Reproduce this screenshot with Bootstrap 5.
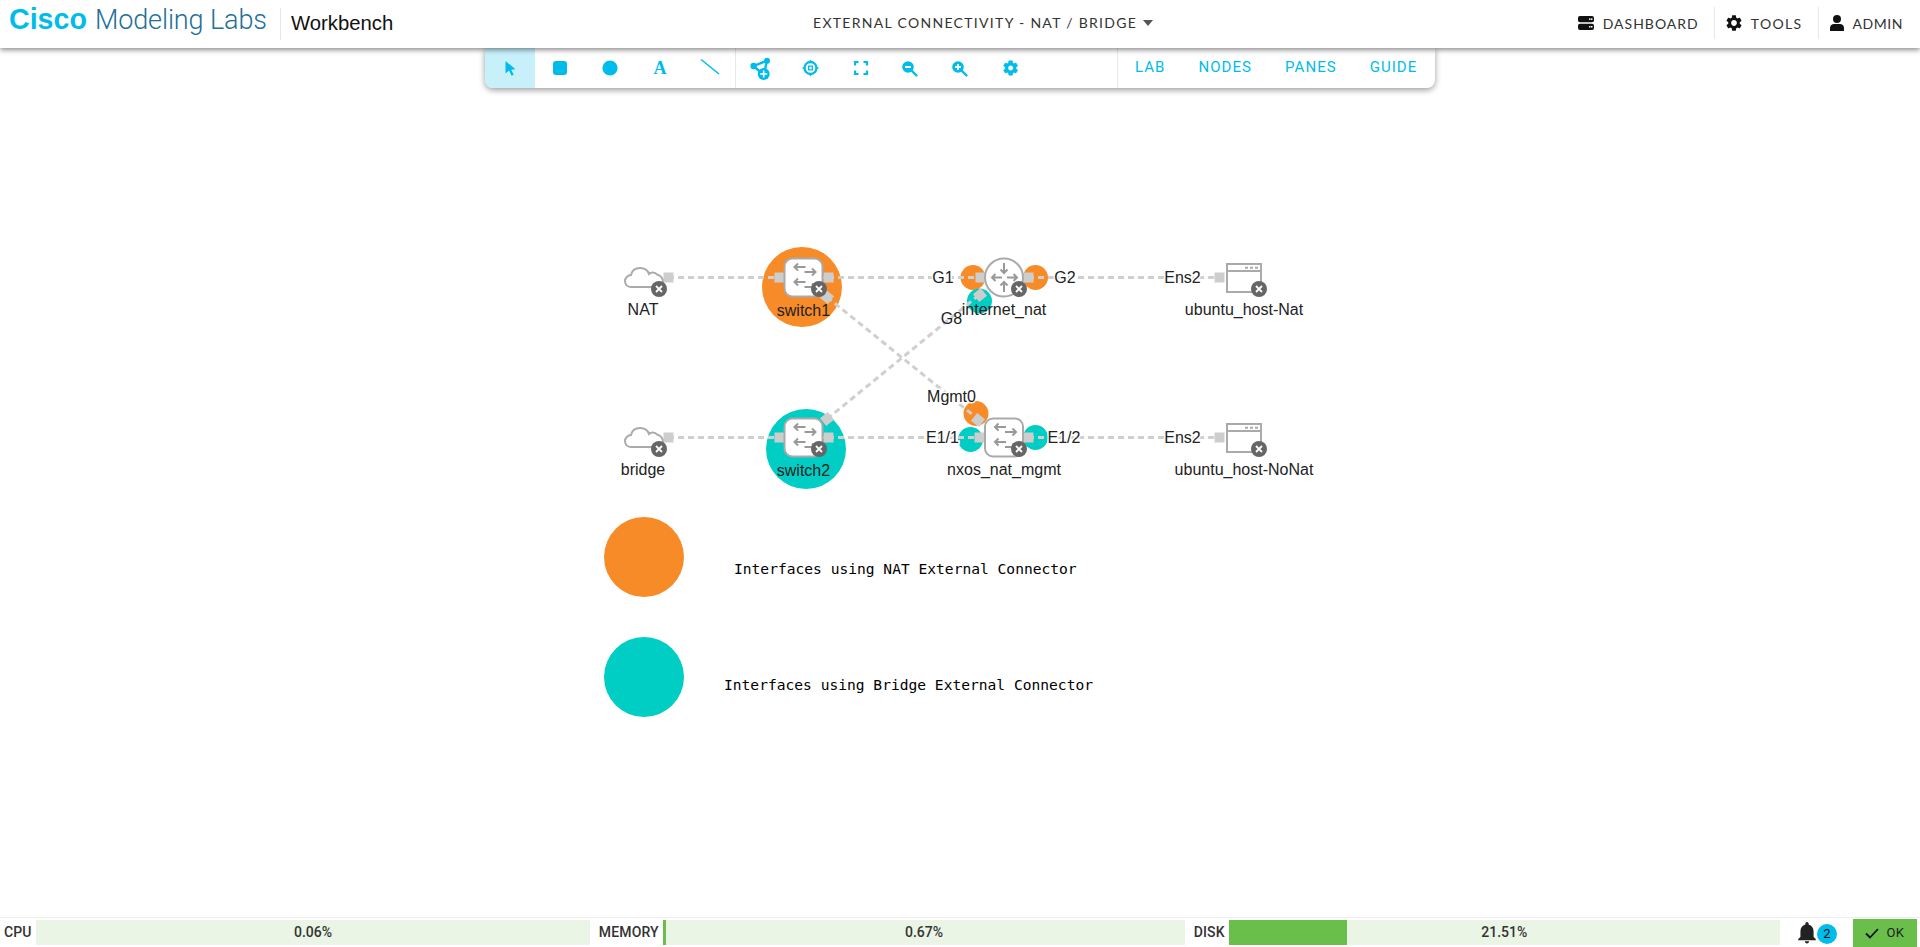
<!DOCTYPE html>
<html lang="en">
<head>
<meta charset="utf-8">
<title>Cisco Modeling Labs</title>
<link href="https://cdn.jsdelivr.net/npm/bootstrap@5.3.0/dist/css/bootstrap.min.css" rel="stylesheet">
<style>
html,body{height:100%;overflow:hidden;background:#fff}
.app-shell{height:947px}
.top-bar{height:48px;flex:none;background:#fff;box-shadow:0 2px 5px rgba(0,0,0,.45);z-index:5;padding:0;flex-wrap:nowrap;align-items:stretch;justify-content:flex-start}
.logo-block{width:281px;padding:0 0 0 9px;margin:8px 0 0;font-size:28.6px;line-height:22px;height:32px;align-self:flex-start;border-right:1px solid #e6e6e6;white-space:nowrap;font-family:"Liberation Sans",sans-serif}
.logo-cisco{font-weight:700;color:#00bceb}
.logo-rest{font-family:Roboto,sans-serif;font-weight:300;color:#236f97;margin-left:8px;font-size:27px;letter-spacing:-.1px}
.wb-name{font-family:"Liberation Sans",sans-serif;font-size:20.3px;color:#111;padding-left:10px;width:532px;line-height:46px}
.nav-caps{font-family:Lato,sans-serif;font-weight:400;font-size:14px;color:#333;letter-spacing:1.3px;white-space:nowrap}
.lab-title{width:400px;line-height:46px}
.caret-mark{display:inline-block;width:0;height:0;border-left:5.5px solid transparent;border-right:5.5px solid transparent;border-top:6px solid #555;margin-left:6px;vertical-align:2px}
.top-links{margin-left:auto;padding-right:17px;padding-bottom:2px;align-items:center}
.top-link{display:flex;align-items:center;height:32px;gap:9px;letter-spacing:1px}
.top-link+.top-link{border-left:1px solid #e8e8e8;margin-left:15px;padding-left:11px}
.tight-caps{letter-spacing:.55px}
.wide-caps{letter-spacing:1.35px}
.work-area{flex:1 1 auto;min-height:0}
.tool-strip{width:950px;height:40px;background:#fff;border-radius:0 0 8px 8px;box-shadow:0 2px 6px rgba(0,0,0,.4);z-index:3;overflow:hidden}
.tool-btn{width:50px;height:40px;padding:0;border:0;border-radius:0;display:flex;align-items:center;justify-content:center}
.tool-btn.is-on{background:#c7f0fb}
.tool-group-a{border-right:1px solid #e8e8e8}
.tool-letter{font-family:"Liberation Serif",serif;font-weight:700;font-size:18px;color:#00bceb;line-height:1}
.tool-words{margin-left:auto;width:318px;border-left:1px solid #e8e8e8;padding-left:17px;gap:33px;align-items:center}
.tool-word{font-family:Roboto,sans-serif;font-size:15px;letter-spacing:1.05px;color:#00bceb;padding:0 0 2px;border:0}
.canvas-svg{display:block}
.dlink{stroke:#cfcfcf;stroke-width:3;stroke-dasharray:6 4;fill:none}
.dport{fill:#cdcdcd}
.dlabel{font-family:"Liberation Sans",sans-serif;font-size:16px;fill:#222;text-anchor:middle}
.dif{paint-order:stroke;stroke:#fff;stroke-width:3px}
.legend-text{font-family:"DejaVu Sans Mono",monospace;font-size:14.6px;fill:#000}
.darrow{stroke:#999;stroke-width:2;fill:none}
.status-bar{height:30px;flex:none;border-top:1px solid #eee;padding:2px 3px 0 4px;gap:8.5px;align-items:flex-start;background:#fff}
.metric{flex:1 1 0;display:flex;align-items:center;gap:4px;height:25px}
.metric-name{font-family:Roboto,sans-serif;font-weight:500;font-size:14px;color:#333;letter-spacing:.15px}
.metric-track{flex:1 1 auto;height:25px;background:#eaf5e5;border-radius:0;position:relative}
.metric-fill{background:#6abf4b}
.metric-value{position:absolute;inset:0;display:flex;align-items:center;justify-content:center;font-family:Roboto,sans-serif;font-weight:500;font-size:14px;color:#333}
.bell-block{width:73px;flex:none;padding-left:17px;height:25px;gap:0;align-items:center;margin-left:-8.5px}
.bell-count{width:20px;height:20px;border-radius:50%;background:#00bceb;color:#111;font-family:Roboto,sans-serif;font-size:13px;display:flex;align-items:center;justify-content:center;margin-top:2px}
.ok-chip{width:64px;height:28px;flex:none;background:#6abf4b;color:#222;font-family:Roboto,sans-serif;font-weight:400;font-size:13px;letter-spacing:.5px;display:flex;align-items:center;justify-content:center;gap:7px;margin:-1px 0 0 -8.5px;padding:0;border:0;border-radius:0}
</style>
</head>
<body>
<div class="app-shell d-flex flex-column">
  <nav class="navbar top-bar d-flex">
    <div class="navbar-brand logo-block"><span class="logo-cisco">Cisco</span><span class="logo-rest">Modeling Labs</span></div>
    <div class="wb-name">Workbench</div>
    <div class="nav-caps lab-title">EXTERNAL CONNECTIVITY - NAT / BRIDGE<span class="caret-mark"></span></div>
    <div class="d-flex top-links">
      <div class="top-link nav-caps">
        <svg width="16" height="14" viewBox="0 0 16 14"><rect x="0" y="0" width="16" height="6.3" rx="2" fill="#111"/><rect x="0" y="7.7" width="16" height="6.3" rx="2" fill="#111"/><rect x="11" y="2.4" width="1.5" height="1.5" fill="#fff"/><rect x="13" y="2.4" width="1.5" height="1.5" fill="#fff"/><rect x="11" y="10" width="1.5" height="1.5" fill="#fff"/><rect x="13" y="10" width="1.5" height="1.5" fill="#fff"/></svg>
        <span>DASHBOARD</span>
      </div>
      <div class="top-link nav-caps wide-caps">
        <svg width="16" height="16" viewBox="2 2 20 20"><path fill="#111" d="M19.14 12.94c.04-.3.06-.61.06-.94 0-.32-.02-.64-.07-.94l2.03-1.58c.18-.14.23-.41.12-.61l-1.92-3.32c-.12-.22-.37-.29-.59-.22l-2.39.96c-.5-.38-1.03-.7-1.62-.94l-.36-2.54c-.04-.24-.24-.41-.48-.41h-3.84c-.24 0-.43.17-.47.41l-.36 2.54c-.59.24-1.13.57-1.62.94l-2.39-.96c-.22-.08-.47 0-.59.22L2.74 8.87c-.12.21-.08.47.12.61l2.03 1.58c-.05.3-.09.63-.09.94s.02.64.07.94l-2.03 1.58c-.18.14-.23.41-.12.61l1.92 3.32c.12.22.37.29.59.22l2.39-.96c.5.38 1.03.7 1.62.94l.36 2.54c.05.24.24.41.48.41h3.84c.24 0 .44-.17.47-.41l.36-2.54c.59-.24 1.13-.56 1.62-.94l2.39.96c.22.08.47 0 .59-.22l1.92-3.32c.12-.22.07-.47-.12-.61l-2.01-1.58zM12 15.6c-1.98 0-3.6-1.62-3.6-3.6s1.62-3.6 3.6-3.6 3.6 1.62 3.6 3.6-1.62 3.6-3.6 3.6z"/></svg>
        <span>TOOLS</span>
      </div>
      <div class="top-link nav-caps tight-caps">
        <svg width="14" height="16" viewBox="0 0 14 16"><circle cx="7" cy="4" r="4" fill="#111"/><path d="M0 16v-3c0-2.5 2-4 4-4h6c2 0 4 1.500 4 4v3z" fill="#111"/></svg>
        <span>ADMIN</span>
      </div>
    </div>
  </nav>

  <main class="work-area position-relative">
    <div class="tool-strip d-flex position-absolute top-0 start-50 translate-middle-x">
      <div class="d-flex tool-group-a">
        <button class="btn tool-btn is-on" aria-label="Select"><svg width="30" height="30"><path d="M10.500 8l10 8.300-4.300.5 2.500 5-2.200 1-2.400-5.200-3.600 3z" fill="#00bceb"/></svg></button>
        <button class="btn tool-btn" aria-label="Rectangle"><svg width="30" height="30"><rect x="8" y="8" width="14" height="14" rx="3" fill="#00bceb"/></svg></button>
        <button class="btn tool-btn" aria-label="Ellipse"><svg width="30" height="30"><circle cx="15" cy="15" r="7.600" fill="#00bceb"/></svg></button>
        <button class="btn tool-btn tool-letter">A</button>
        <button class="btn tool-btn" aria-label="Line"><svg width="30" height="30"><path d="M6 6.500l18 14.500" stroke="#00bceb" stroke-width="1.600" fill="none"/></svg></button>
      </div>
      <div class="d-flex">
        <button class="btn tool-btn" aria-label="Add node"><svg width="30" height="30"><path d="M7.600 13L21 7.700 17.700 22z" stroke="#00bceb" stroke-width="2.400" fill="none" stroke-linejoin="round"/><circle cx="7.600" cy="13" r="3.200" fill="#00bceb"/><circle cx="21" cy="7.700" r="3" fill="#00bceb"/><circle cx="17.700" cy="21" r="6" fill="#00bceb"/><path d="M17.700 17.500v7M14.200 21h7" stroke="#fff" stroke-width="1.600"/></svg></button>
        <button class="btn tool-btn" aria-label="Center"><svg width="30" height="30"><circle cx="14.500" cy="15" r="6" stroke="#00bceb" stroke-width="2.300" fill="none"/><path d="M14.500 7v3M14.500 20v3M6.500 15h3M19.500 15h3M12.700 12.500v5M16.300 12.500v5M12 13.200h5M12 16.800h5" stroke="#00bceb" stroke-width="1.300" fill="none"/></svg></button>
        <button class="btn tool-btn" aria-label="Fit"><svg width="30" height="30"><path d="M9 12.500V9h3.500M17.500 9H21v3.500M21 17.500V21h-3.500M12.500 21H9v-3.500" stroke="#00bceb" stroke-width="2.200" fill="none"/></svg></button>
        <button class="btn tool-btn" aria-label="Zoom out"><svg width="30" height="30"><circle cx="12" cy="14" r="5.800" fill="#00bceb"/><path d="M16 18l4.500 4.500" stroke="#00bceb" stroke-width="2.400" stroke-linecap="round"/><path d="M9 14h6" stroke="#fff" stroke-width="1.800"/></svg></button>
        <button class="btn tool-btn" aria-label="Zoom in"><svg width="30" height="30"><circle cx="12" cy="14" r="5.800" fill="#00bceb"/><path d="M16 18l4.500 4.500" stroke="#00bceb" stroke-width="2.400" stroke-linecap="round"/><path d="M9 14h6M12 11v6" stroke="#fff" stroke-width="1.800"/></svg></button>
        <button class="btn tool-btn" aria-label="Settings"><svg width="30" height="30" viewBox="-7.500 -8 40 40"><path fill="#00bceb" stroke="#00bceb" stroke-width=".8" d="M19.140 12.940c.04-.3.06-.61.06-.94 0-.32-.02-.64-.07-.94l2.030-1.580c.18-.14.230-.41.120-.61l-1.920-3.320c-.12-.22-.37-.29-.59-.22l-2.390.96c-.5-.38-1.030-.7-1.620-.94l-.36-2.540c-.04-.24-.24-.41-.48-.41h-3.840c-.24 0-.43.170-.47.410l-.36 2.540c-.59.24-1.130.57-1.620.94l-2.390-.96c-.22-.08-.47 0-.59.22L2.740 8.870c-.12.210-.08.470.12.610l2.030 1.580c-.05.3-.09.630-.09.940s.02.640.07.940l-2.030 1.580c-.18.140-.23.410-.12.610l1.920 3.320c.12.220.37.290.59.220l2.390-.96c.5.380 1.030.7 1.620.94l.36 2.540c.05.240.24.410.48.410h3.840c.24 0 .44-.17.47-.41l.36-2.540c.59-.24 1.130-.56 1.620-.94l2.390.96c.22.080.47 0 .59-.22l1.920-3.320c.12-.22.070-.47-.12-.61l-2.010-1.580zM12 15.600c-1.980 0-3.600-1.620-3.600-3.600s1.620-3.600 3.600-3.600 3.600 1.620 3.600 3.600-1.620 3.600-3.600 3.600z"/></svg></button>
      </div>
      <div class="d-flex tool-words">
        <button class="btn tool-word">LAB</button>
        <button class="btn tool-word">NODES</button>
        <button class="btn tool-word">PANES</button>
        <button class="btn tool-word">GUIDE</button>
      </div>
    </div>

    <svg class="canvas-svg" width="1920" height="869" viewBox="0 48 1920 869" xmlns="http://www.w3.org/2000/svg">
      <defs>
        <g id="xbadge"><circle r="8" fill="#666"/><path d="M-3-3L3 3M3-3L-3 3" stroke="#fff" stroke-width="1.800"/></g>
        <g id="cloud"><path d="M631 287C626.500 287 625 283.500 625 281C625 278 628 275 631 275C632 270 636 268 640 268C645 268 648 271 649 274C651 272 655 272 657 274.500C660 275 663 278 663 282L661 287Z" fill="#fff" stroke="#aaa" stroke-width="2"/></g>
        <g id="swbox"><rect x="-19" y="-19" width="38" height="38" rx="8" fill="#fff" stroke="#aaa" stroke-width="2"/>
          <path class="darrow" d="M-9-10.500H2M-5.500-14l-3.500 3.500 3.500 3.500M1-5.500H12M8.500-9l3.500 3.500-3.500 3.500M-9 4.500H2M-5.500 1l-3.500 3.500 3.500 3.500M1 9.500H12M8.500 6l3.500 3.500-3.500 3.500"/></g>
        <g id="host"><rect x="1227" y="264" width="34" height="28" fill="#fff" stroke="#aaa" stroke-width="2"/><path d="M1227 271h34" stroke="#aaa" stroke-width="1.800"/><path d="M1245 267.800h3M1250 267.800h3M1255 267.800h3" stroke="#aaa" stroke-width="2"/></g>
      </defs>

      <circle cx="802" cy="287" r="40" fill="#f68b28"/>
      <circle cx="806" cy="449" r="40" fill="#00cdc3"/>
      <circle cx="973" cy="277.500" r="12.500" fill="#f68b28"/>
      <circle cx="1035.500" cy="277.500" r="12.500" fill="#f68b28"/>
      <circle cx="979.500" cy="301" r="12.500" fill="#00cdc3"/>
      <circle cx="976" cy="413.500" r="12.500" fill="#f68b28"/>
      <circle cx="970.500" cy="439.500" r="12.500" fill="#00cdc3"/>
      <circle cx="1035.500" cy="437.500" r="12.500" fill="#00cdc3"/>

      <path class="dlink" d="M668 277.500H1219"/>
      <path class="dlink" d="M668 437.500H1219"/>
      <path class="dlink" d="M827 297L978 419"/>
      <path class="dlink" d="M827 419L979 295"/>

      <rect class="dport" x="663.500" y="272.500" width="10" height="10"/>
      <rect class="dport" x="774.500" y="272.500" width="10" height="10"/>
      <rect class="dport" x="823.500" y="272.500" width="10" height="10"/>
      <rect class="dport" x="975.500" y="272.500" width="10" height="10"/>
      <rect class="dport" x="1023.500" y="272.500" width="10" height="10"/>
      <rect class="dport" x="1214.500" y="272.500" width="10" height="10"/>
      <rect class="dport" x="663.500" y="432.500" width="10" height="10"/>
      <rect class="dport" x="774.500" y="432.500" width="10" height="10"/>
      <rect class="dport" x="823.500" y="432.500" width="10" height="10"/>
      <rect class="dport" x="974.500" y="432.500" width="10" height="10"/>
      <rect class="dport" x="1023.500" y="432.500" width="10" height="10"/>
      <rect class="dport" x="1214.500" y="432.500" width="10" height="10"/>
      <rect class="dport" x="-5" y="-5" width="10" height="10" transform="translate(827 297) rotate(39)"/>
      <rect class="dport" x="-5" y="-5" width="10" height="10" transform="translate(827 419) rotate(-39)"/>
      <rect class="dport" x="-5" y="-5" width="10" height="10" transform="translate(980 295) rotate(-39)"/>
      <rect class="dport" x="-5" y="-5" width="10" height="10" transform="translate(978 420) rotate(39)"/>

      <use href="#cloud"/>
      <use href="#cloud" y="160"/>
      <use href="#swbox" x="803.500" y="277.500"/>
      <use href="#swbox" x="803.500" y="437.500"/>
      <use href="#swbox" x="1004" y="437.500"/>
      <circle cx="1004" cy="277.500" r="19" fill="#fff" stroke="#aaa" stroke-width="2"/>
      <path class="darrow" d="M1004 263v10M1000.500 269.500l3.500 3.500 3.500-3.500M1004 282v10M1000.500 285.500l3.500-3.500 3.500 3.500M992 277.500h10M995.500 274l-3.500 3.500 3.500 3.500M1007 277.500h10M1013.500 274l3.500 3.500-3.500 3.500"/>
      <use href="#host"/>
      <use href="#host" y="160"/>

      <use href="#xbadge" x="659" y="289"/>
      <use href="#xbadge" x="659" y="449"/>
      <use href="#xbadge" x="819" y="289"/>
      <use href="#xbadge" x="819" y="449"/>
      <use href="#xbadge" x="1019" y="289"/>
      <use href="#xbadge" x="1019" y="449"/>
      <use href="#xbadge" x="1259" y="289"/>
      <use href="#xbadge" x="1259" y="449"/>

      <text class="dlabel" x="643" y="315">NAT</text>
      <text class="dlabel" x="643" y="475">bridge</text>
      <text class="dlabel" x="803.500" y="316">switch1</text>
      <text class="dlabel" x="803.500" y="476">switch2</text>
      <text class="dlabel" x="1004" y="315">internet_nat</text>
      <text class="dlabel" x="1004" y="475">nxos_nat_mgmt</text>
      <text class="dlabel" x="1244" y="315">ubuntu_host-Nat</text>
      <text class="dlabel" x="1244" y="475">ubuntu_host-NoNat</text>

      <text class="dlabel dif" x="943" y="283">G1</text>
      <text class="dlabel dif" x="1065" y="283">G2</text>
      <text class="dlabel" x="951.500" y="324">G8</text>
      <text class="dlabel dif" x="951.500" y="402">Mgmt0</text>
      <text class="dlabel dif" x="942.500" y="443">E1/1</text>
      <text class="dlabel dif" x="1064" y="443">E1/2</text>
      <text class="dlabel dif" x="1182.500" y="283">Ens2</text>
      <text class="dlabel dif" x="1182.500" y="443">Ens2</text>

      <circle cx="644" cy="557" r="40" fill="#f68b28"/>
      <circle cx="644" cy="677" r="40" fill="#00cdc3"/>
      <text class="legend-text" x="734" y="574">Interfaces using NAT External Connector</text>
      <text class="legend-text" x="724" y="690">Interfaces using Bridge External Connector</text>
    </svg>
  </main>

  <footer class="status-bar d-flex">
    <div class="metric"><span class="metric-name">CPU</span><div class="progress metric-track"><span class="metric-value">0.06%</span></div></div>
    <div class="metric"><span class="metric-name">MEMORY</span><div class="progress metric-track"><div class="progress-bar metric-fill" style="width:0.67%"></div><span class="metric-value">0.67%</span></div></div>
    <div class="metric"><span class="metric-name">DISK</span><div class="progress metric-track"><div class="progress-bar metric-fill" style="width:21.51%"></div><span class="metric-value">21.51%</span></div></div>
    <div class="bell-block d-flex">
      <svg width="20" height="23" viewBox="3 1.500 18 21"><path fill="#222" d="M12 22c1.100 0 2-.9 2-2h-4c0 1.100.89 2 2 2zm6-6v-5c0-3.070-1.640-5.640-4.500-6.320V4c0-.83-.67-1.500-1.500-1.500s-1.500.67-1.500 1.500v.68C7.630 5.360 6 7.920 6 11v5l-2 2v1h16v-1l-2-2z"/></svg>
      <span class="bell-count">2</span>
    </div>
    <button class="btn ok-chip"><svg width="14" height="11" viewBox="0 0 14 11"><path d="M1 5.500l4 4L13 1" stroke="#111" stroke-width="1.800" fill="none"/></svg><span>OK</span></button>
  </footer>
</div>
</body>
</html>
